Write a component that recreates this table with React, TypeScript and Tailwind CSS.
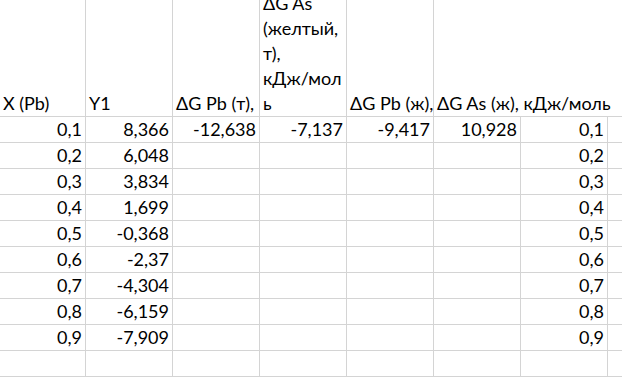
const line = "border-[#d4d4d4]";

const rows: string[][] = [
  ["0,1", "8,366", "-12,638", "-7,137", "-9,417", "10,928", "0,1"],
  ["0,2", "6,048", "", "", "", "", "0,2"],
  ["0,3", "3,834", "", "", "", "", "0,3"],
  ["0,4", "1,699", "", "", "", "", "0,4"],
  ["0,5", "-0,368", "", "", "", "", "0,5"],
  ["0,6", "-2,37", "", "", "", "", "0,6"],
  ["0,7", "-4,304", "", "", "", "", "0,7"],
  ["0,8", "-6,159", "", "", "", "", "0,8"],
  ["0,9", "-7,909", "", "", "", "", "0,9"],
  ["", "", "", "", "", "", ""],
];

function HeaderCell({ children, className = "" }: { children?: React.ReactNode; className?: string }) {
  return (
    <div className={`flex h-[117px] items-end border-b ${line} px-[3px] leading-[25px] ${className}`}>
      {children}
    </div>
  );
}

export default function App() {
  return (
    <div
      className="h-[377px] w-[622px] overflow-hidden bg-white text-[18px] text-black"
      style={{ fontFamily: "Lato, 'Liberation Sans', sans-serif" }}
    >
      <div className="grid grid-cols-[86px_87px_87px_87px_87px_87px_87px_1fr]">
        <HeaderCell className={`border-r ${line}`}>X (Pb)</HeaderCell>
        <HeaderCell className={`border-r ${line}`}>Y1</HeaderCell>
        <HeaderCell className={`overflow-hidden whitespace-nowrap border-r ${line}`}>ΔG Pb (т), кДж/моль</HeaderCell>
        <HeaderCell className={`overflow-hidden border-r ${line}`}>
          <div className="flex flex-col whitespace-nowrap">
            <span>ΔG As</span>
            <span>(желтый,</span>
            <span>т),</span>
            <span>кДж/мол</span>
            <span>ь</span>
          </div>
        </HeaderCell>
        <HeaderCell className={`overflow-hidden whitespace-nowrap border-r ${line}`}>ΔG Pb (ж), кДж/моль</HeaderCell>
        <HeaderCell className="relative z-10 overflow-visible whitespace-nowrap">ΔG As (ж), кДж/моль</HeaderCell>
        <HeaderCell />
        <HeaderCell />

        {rows.map((row, i) =>
          [...row, ""].map((v, j) => (
            <div
              key={`${i}-${j}`}
              className={`h-[26px] border-b ${line} ${j < 7 ? `border-r ${line}` : ""} px-[3px] text-right leading-[24px]`}
            >
              {v}
            </div>
          ))
        )}
      </div>
    </div>
  );
}
